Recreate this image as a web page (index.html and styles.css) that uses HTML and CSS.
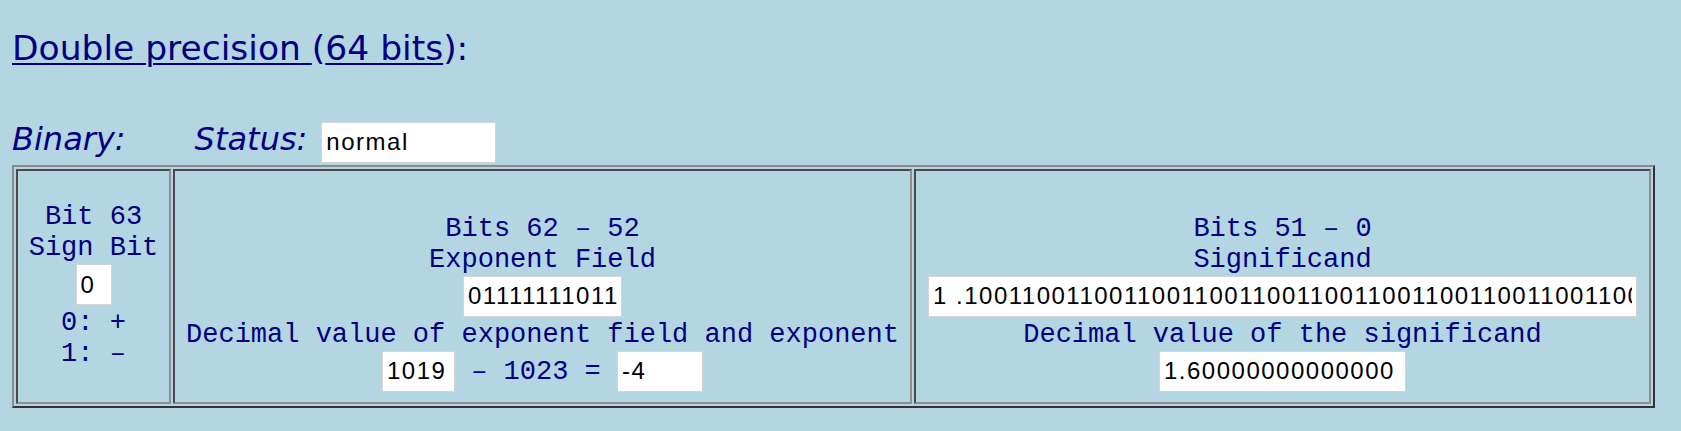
FILE: index.html
```html
<!DOCTYPE html>
<html lang="en">
<head>
<meta charset="utf-8">
<title>Double precision (64 bits)</title>
<link rel="stylesheet" href="styles.css">
</head>
<body>
<div class="page">
  <h2 class="title"><u>Double precision </u>(<u>64 bits</u>):</h2>
  <div class="status-row">
    <span class="label binary">Binary:</span>
    <span class="label status">Status:</span>
    <input class="field f-status" type="text" value="normal">
  </div>
  <div class="bits">
    <div class="cell sign">
      <div class="line">Bit 63</div>
      <div class="line">Sign Bit</div>
      <div class="inrow"><input class="field f-sign" type="text" value="0"></div>
      <div class="line">0: +</div>
      <div class="line">1: –</div>
    </div>
    <div class="cell wide">
      <div class="line">Bits 62 – 52</div>
      <div class="line">Exponent Field</div>
      <div class="inrow"><input class="field f-exp" type="text" value="01111111011"></div>
      <div class="line">Decimal value of exponent field and exponent</div>
      <div class="inrow last"><input class="field f-dec1" type="text" value="1019"><span class="line"> – 1023 = </span><input class="field f-dec2" type="text" value="-4"></div>
    </div>
    <div class="cell wide">
      <div class="line">Bits 51 – 0</div>
      <div class="line">Significand</div>
      <div class="inrow"><input class="field f-sig" type="text" value="1 .1001100110011001100110011001100110011001100110011010"></div>
      <div class="line">Decimal value of the significand</div>
      <div class="inrow last"><input class="field f-val" type="text" value="1.60000000000000"></div>
    </div>
  </div>
</div>
</body>
</html>
```
FILE: styles.css
```css
body {
  margin: 0;
  background: #b4d6e2;
}

.page {
  padding: 0 12px;
}

.title {
  margin: 28px 0 0;
  font: normal 34.5px/40px "DejaVu Sans", sans-serif;
  color: #000080;
}

.title u {
  text-decoration-thickness: 1.5px;
  text-underline-offset: 3px;
}

.status-row {
  display: flex;
  align-items: baseline;
  margin-top: 52px;
}

.label {
  font: italic 32px "DejaVu Sans", sans-serif;
  color: #000080;
}

.status {
  margin-left: 69px;
}

.field {
  box-sizing: border-box;
  height: 41px;
  margin: 0;
  padding: 0 4px;
  border: 1px solid #d4d4d4;
  background: #ffffff;
  color: #000000;
  font: 24px "Liberation Sans", Arial, sans-serif;
  letter-spacing: 1.5px;
  outline: none;
}

.f-status { width: 175px; margin-left: 14px; }
.f-sign { width: 36px; }
.f-exp { width: 159px; }
.f-dec1 { width: 73px; }
.f-dec2 { width: 86px; }
.f-sig { width: 709px; }
.f-val { width: 247px; }

.bits {
  display: grid;
  grid-template-columns: 155px 739px 737px;
  gap: 2px;
  padding: 2px;
  width: max-content;
  margin-top: 2px;
  border: 2px solid;
  border-color: #8a8a8a #333333 #333333 #8a8a8a;
}

.cell {
  box-sizing: border-box;
  height: 235px;
  border: 2px solid;
  border-color: #4a4a4a #8f8f8f #8f8f8f #4a4a4a;
  display: flex;
  flex-direction: column;
  justify-content: center;
  align-items: center;
  font: 27px/31px "Liberation Mono", "Courier New", monospace;
  color: #000080;
  white-space: pre;
}

.wide {
  padding-top: 33px;
}

.line {
  line-height: 31px;
}

.inrow {
  display: flex;
  align-items: baseline;
  padding-bottom: 3px;
}

.inrow.last {
  padding-bottom: 0;
}
```
